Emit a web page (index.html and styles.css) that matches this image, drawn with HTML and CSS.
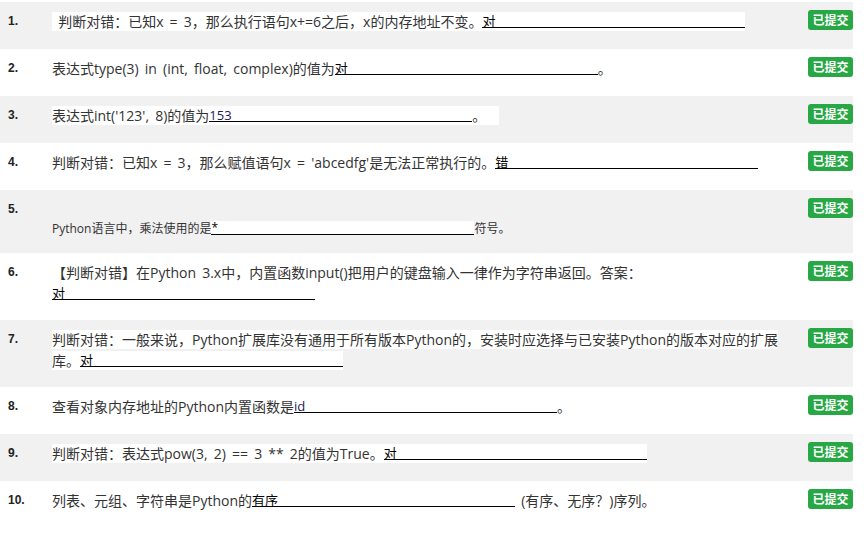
FILE: index.html
```html
<!DOCTYPE html>
<html lang="zh-CN">
<head>
<meta charset="utf-8">
<title>答题</title>
<link rel="stylesheet" href="styles.css">
</head>
<body>
<div class="list">
  <div class="row gray">
    <div class="num">1.</div>
    <div class="content"><span class="hl">&nbsp;判断对错：已知x = 3，那么执行语句x+=6之后，x的内存地址不变。<span class="ans">对</span></span></div>
    <div class="badge">已提交</div>
  </div>
  <div class="row">
    <div class="num">2.</div>
    <div class="content">表达式type(3) in (int, float, complex)的值为<span class="ans">对</span>。</div>
    <div class="badge">已提交</div>
  </div>
  <div class="row gray">
    <div class="num">3.</div>
    <div class="content"><span class="hl">表达式int('123', 8)的值为<span class="ans navy">153</span>。&nbsp;&nbsp;</span></div>
    <div class="badge">已提交</div>
  </div>
  <div class="row">
    <div class="num">4.</div>
    <div class="content">判断对错：已知x = 3，那么赋值语句x = 'abcedfg'是无法正常执行的。<span class="ans">错</span></div>
    <div class="badge">已提交</div>
  </div>
  <div class="row gray multi">
    <div class="num">5.</div>
    <div class="content"><div class="empty"></div><div class="small">Python语言中，乘法使用的是<span class="ans">*</span>符号。</div></div>
    <div class="badge">已提交</div>
  </div>
  <div class="row multi">
    <div class="num">6.</div>
    <div class="content">【判断对错】在Python 3.x中，内置函数input()把用户的键盘输入一律作为字符串返回。答案：<br><span class="ans">对</span></div>
    <div class="badge">已提交</div>
  </div>
  <div class="row gray multi">
    <div class="num">7.</div>
    <div class="content"><span class="hl">判断对错：一般来说，Python扩展库没有通用于所有版本Python的，安装时应选择与已安装Python的版本对应的扩展<br>库。<span class="ans">对</span></span></div>
    <div class="badge">已提交</div>
  </div>
  <div class="row">
    <div class="num">8.</div>
    <div class="content">查看对象内存地址的Python内置函数是<span class="ans navy">id</span>。</div>
    <div class="badge">已提交</div>
  </div>
  <div class="row gray">
    <div class="num">9.</div>
    <div class="content"><span class="hl">判断对错：表达式pow(3, 2) == 3 ** 2的值为True。<span class="ans">对</span></span></div>
    <div class="badge">已提交</div>
  </div>
  <div class="row">
    <div class="num">10.</div>
    <div class="content">列表、元组、字符串是Python的<span class="ans">有序</span> (有序、无序？)序列。</div>
    <div class="badge">已提交</div>
  </div>
</div>
</body>
</html>
```
FILE: styles.css
```css
* { box-sizing: border-box; }
body {
  margin: 0;
  background: #fff;
  font-family: "Open Sans", "Noto Sans CJK SC", sans-serif;
  color: #333;
}
.list {
  margin-top: 2px;
  width: 853px;
}
.row {
  display: grid;
  grid-template-columns: 44px 1fr 45px;
  align-items: start;
  padding: 9px 0 17px 8px;
  background: #fff;
}
.row.gray { background: #f1f1f1; }
.row.multi { padding-bottom: 16px; }
.num {
  font-family: "Liberation Sans", Arial, sans-serif;
  font-weight: bold;
  font-size: 12px;
  line-height: 21px;
  color: #222;
}
.content {
  font-size: 14px;
  line-height: 21px;
  word-spacing: 2.5px;
  padding-right: 12px;
}
.hl { background: #fff; }
.ans {
  display: inline-block;
  width: 263px;
  height: 14px;
  line-height: 14px;
  font-size: 13px;
  word-spacing: 0;
  color: #000;
  border-bottom: 1px solid #000;
  vertical-align: 1px;
  background: #fff;
}
.ans.navy { color: #1a1a5e; }
.empty { height: 21px; }
.small {
  font-size: 12px;
  line-height: 17px;
  word-spacing: 0;
}
.small .ans { font-size: 12px; }
.badge {
  margin-top: -1px;
  height: 20px;
  line-height: 20px;
  background: #28a745;
  color: #fff;
  font-size: 12px;
  font-weight: bold;
  text-align: center;
  border-radius: 3px;
  font-family: "Noto Sans CJK SC", sans-serif;
}
```
